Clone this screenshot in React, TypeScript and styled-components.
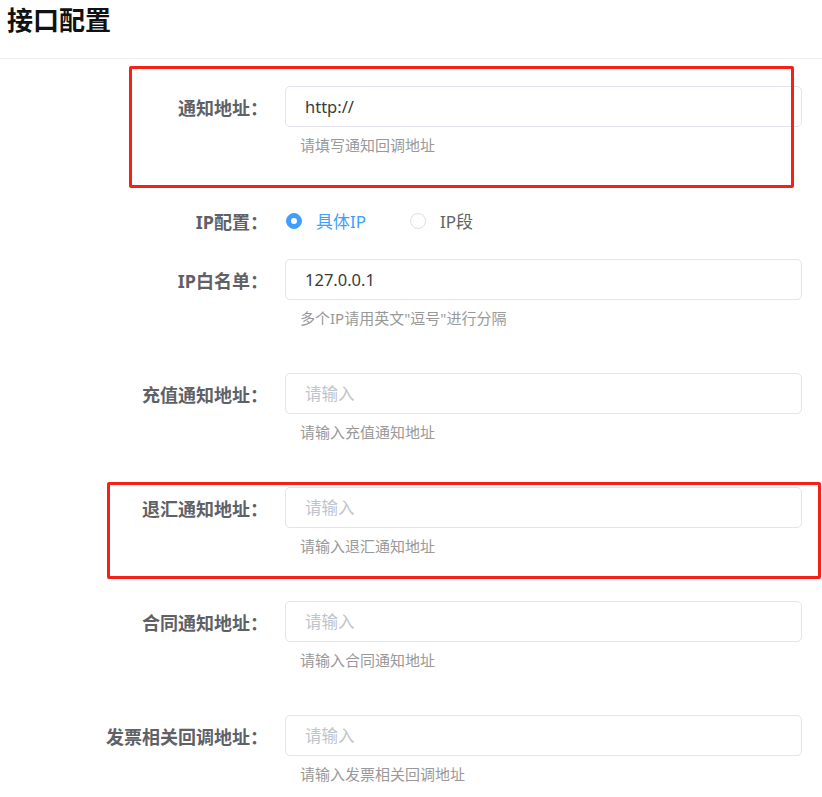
import { createGlobalStyle } from "styled-components";
import styled from "styled-components";

const GlobalStyle = createGlobalStyle`
  body {
    margin: 0;
    background: #ffffff;
    font-family: "Noto Sans", "Noto Sans CJK SC", sans-serif;
  }
`;

const Styled_Page = styled.div`
  width: 822px;
  min-height: 797px;
  background: #ffffff;
`;

const Styled_Header = styled.header`
  height: 59px;
  border-bottom: 1px solid #ededf2;
  box-sizing: border-box;
  padding: 3px 7px 0;
`;

const Styled_Title = styled.h1`
  margin: 0;
  font-size: 26px;
  line-height: 34px;
  font-weight: 700;
  color: #111111;
`;

const Styled_Form = styled.form`
  padding: 27px 20px 0 0;
`;

const Styled_Item = styled.div<{ $spacing: number }>`
  position: relative;
  display: grid;
  grid-template-columns: 268px 1fr;
  column-gap: 17px;
  margin-bottom: ${(p) => p.$spacing}px;
`;

const Styled_Label = styled.label`
  height: 41px;
  display: flex;
  align-items: center;
  justify-content: flex-end;
  font-size: 18px;
  font-weight: 700;
  color: #5f6166;
  white-space: nowrap;
`;

const Styled_Control = styled.div`
  display: flex;
  flex-direction: column;
`;

const Styled_Input = styled.input`
  height: 41px;
  box-sizing: border-box;
  border: 1px solid #e3e4ec;
  border-radius: 5px;
  padding: 0 19px;
  font-family: inherit;
  font-size: 16.5px;
  color: #3a3a3a;
  outline: none;

  &::placeholder {
    color: #c0c4cc;
  }
`;

const Styled_Help = styled.div`
  margin: 8px 0 0 15px;
  font-size: 15px;
  line-height: 20px;
  color: #999999;
`;

const Styled_RadioGroup = styled.div`
  height: 41px;
  display: flex;
  align-items: center;
  gap: 44px;
  padding-left: 1px;
`;

const Styled_Radio = styled.label<{ $checked?: boolean }>`
  display: flex;
  align-items: center;
  gap: 14px;
  font-size: 17px;
  color: ${(p) => (p.$checked ? "#409eff" : "#606266")};
  cursor: pointer;
`;

const Styled_RadioDot = styled.span<{ $checked?: boolean }>`
  width: 16px;
  height: 16px;
  box-sizing: border-box;
  border-radius: 50%;
  border: 1px solid ${(p) => (p.$checked ? "#409eff" : "#dcdfe6")};
  background: ${(p) => (p.$checked ? "#409eff" : "#ffffff")};
  display: flex;
  align-items: center;
  justify-content: center;

  &::after {
    content: "";
    width: 6px;
    height: 6px;
    border-radius: 50%;
    background: #ffffff;
    display: ${(p) => (p.$checked ? "block" : "none")};
  }
`;

// red annotation frame drawn over a form item
const Styled_Mark = styled.div<{ $top: number; $left: number; $width: number; $height: number }>`
  position: absolute;
  top: ${(p) => p.$top}px;
  left: ${(p) => p.$left}px;
  width: ${(p) => p.$width}px;
  height: ${(p) => p.$height}px;
  box-sizing: border-box;
  border: 3px solid #f4211b;
  border-radius: 2px;
  pointer-events: none;
`;

interface Field {
  label: string;
  value?: string;
  help: string;
  mark?: { top: number; left: number; width: number; height: number };
}

const urlFields: Field[] = [
  { label: "充值通知地址：", help: "请输入充值通知地址" },
  {
    label: "退汇通知地址：",
    help: "请输入退汇通知地址",
    mark: { top: -5, left: 107, width: 714, height: 97 }
  },
  { label: "合同通知地址：", help: "请输入合同通知地址" },
  { label: "发票相关回调地址：", help: "请输入发票相关回调地址" }
];

function TextItem({ label, value, help, mark }: Field): JSX.Element {
  return (
    <Styled_Item $spacing={45}>
      <Styled_Label>{label}</Styled_Label>
      <Styled_Control>
        <Styled_Input defaultValue={value} placeholder="请输入" />
        <Styled_Help>{help}</Styled_Help>
      </Styled_Control>
      {mark && <Styled_Mark $top={mark.top} $left={mark.left} $width={mark.width} $height={mark.height} />}
    </Styled_Item>
  );
}

export default function App(): JSX.Element {
  return (
    <Styled_Page>
      <GlobalStyle />
      <Styled_Header>
        <Styled_Title>接口配置</Styled_Title>
      </Styled_Header>

      <Styled_Form>
        <TextItem
          label="通知地址："
          value="http://"
          help="请填写通知回调地址"
          mark={{ top: -20, left: 129, width: 665, height: 122 }}
        />

        <Styled_Item $spacing={18}>
          <Styled_Label>IP配置：</Styled_Label>
          <Styled_RadioGroup>
            <Styled_Radio $checked>
              <Styled_RadioDot $checked />
              具体IP
            </Styled_Radio>
            <Styled_Radio>
              <Styled_RadioDot />
              IP段
            </Styled_Radio>
          </Styled_RadioGroup>
        </Styled_Item>

        <TextItem label="IP白名单：" value="127.0.0.1" help={'多个IP请用英文"逗号"进行分隔'} />

        {urlFields.map((field) => (
          <TextItem key={field.label} {...field} />
        ))}
      </Styled_Form>
    </Styled_Page>
  );
}
